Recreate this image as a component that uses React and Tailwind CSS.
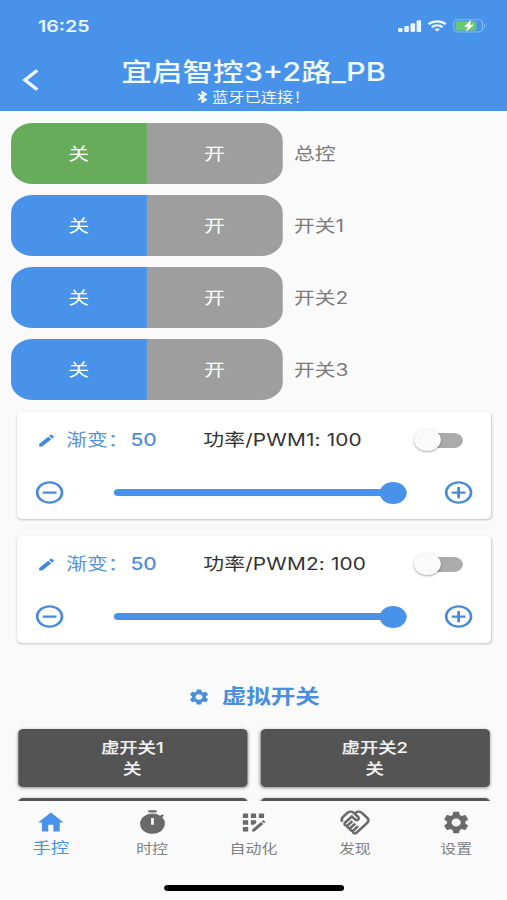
import React from "react";
import {
  MdHome,
  MdTimer,
  MdAppRegistration,
  MdOutlineHandshake,
  MdSettings,
  MdEdit,
  MdAddCircleOutline,
  MdRemoveCircleOutline,
} from "react-icons/md";

const switches = [
  { label: "总控", color: "bg-[#67ac5b]" },
  { label: "开关1", color: "bg-[#4892e9]" },
  { label: "开关2", color: "bg-[#4892e9]" },
  { label: "开关3", color: "bg-[#4892e9]" },
];

const tabs = [
  { label: "手控", Icon: MdHome, size: "h-[27px] w-[25px]", active: true },
  { label: "时控", Icon: MdTimer, size: "h-[27px] w-[27px]" },
  { label: "自动化", Icon: MdAppRegistration, size: "h-[27px] w-[26px]" },
  { label: "发现", Icon: MdOutlineHandshake, size: "-mt-px mb-[-1px] h-[29px] w-[26px]" },
  { label: "设置", Icon: MdSettings, size: "h-[27px] w-[25px]" },
];

function StatusBar() {
  return (
    <div className="flex h-[52px] items-center justify-between pl-[31px] pr-[17px] text-[#e9f5ff]">
      <span className="text-[16px] font-semibold leading-none">16:25</span>
      <div className="flex items-center gap-[5px]">
        <svg className="h-[12px] w-[19px]" viewBox="0 0 19 12" fill="currentColor">
          <rect x="0" y="8" width="3.8" height="4" rx="1" />
          <rect x="5.1" y="6" width="3.8" height="6" rx="1" />
          <rect x="10.2" y="3.3" width="3.8" height="8.7" rx="1" />
          <rect x="15.2" y="0.3" width="3.8" height="11.7" rx="1" />
        </svg>
        <svg className="h-[12px] w-[16px]" viewBox="0 0 16 12" fill="none" stroke="currentColor" strokeWidth="2.2">
          <path d="M1 4.3 A10 10 0 0 1 15 4.3" />
          <path d="M3.7 7.2 A6.2 6.2 0 0 1 12.3 7.2" />
          <path d="M8 11.6 L5.7 9.3 A3.3 3.3 0 0 1 10.3 9.3 Z" fill="currentColor" stroke="none" />
        </svg>
        <svg className="h-[14px] w-[27px]" viewBox="0 0 27 14" fill="none">
          <rect x="0.5" y="0.8" width="23.5" height="12.2" rx="3.4" stroke="#83bdf0" />
          <rect x="2" y="2.2" width="17" height="9.4" rx="2" fill="#68c878" />
          <path d="M25.3 5 a2.4 2.4 0 0 1 0 4 z" fill="#83bdf0" />
          <path d="M14.8 0.8 L9 7.8 H12 L10.4 13 L17 5.8 H13.7 Z" fill="#fff" />
        </svg>
      </div>
    </div>
  );
}

function Header() {
  return (
    <header className="h-[111px] bg-[#4892e9] text-[#f1faff]">
      <StatusBar />
      <div className="flex h-[59px] items-start">
        <div className="w-[60px] pl-[18px] pt-[17px]">
          <svg className="h-[22px] w-[14px]" viewBox="0 0 14 22" fill="none" stroke="currentColor" strokeWidth="3.1">
            <path d="M12.4 1.4 L2.4 11 L12.4 20.6" />
          </svg>
        </div>
        <div className="flex flex-1 flex-col items-center pt-[6px]">
          <h1 className="whitespace-nowrap text-[25px] font-medium leading-[28px]">宜启智控3+2路_PB</h1>
          <div className="flex items-center whitespace-nowrap pt-[2px] text-[13.3px] leading-[18px]">
            <svg className="mr-[3px] h-[12px] w-[9px]" viewBox="0 0 9 12" fill="none" stroke="currentColor" strokeWidth="1.6">
              <path d="M0.8 3 L7.2 8.8 L4.2 11.2 V0.8 L7.2 3.2 L0.8 9" />
            </svg>
            <span>蓝牙已连接！</span>
          </div>
        </div>
        <div className="w-[60px]" />
      </div>
    </header>
  );
}

function SwitchRow({ label, color }) {
  return (
    <div className="flex items-center">
      <div className="flex h-[61px] w-[222px] overflow-hidden rounded-[18px] text-[17px] text-white">
        <div className={"flex w-[110.5px] items-center justify-center pt-[3px] " + color}>关</div>
        <div className="flex flex-1 items-center justify-center bg-[#9e9e9e] pt-[3px]">开</div>
      </div>
      <span className="pl-[9px] pt-[3px] text-[17px] text-[#7b7b7b]">{label}</span>
    </div>
  );
}

function PwmCard({ n }) {
  return (
    <section className="h-[107px] rounded-[4px] bg-white px-[15px] pt-[12px] shadow-[0_1px_2px_rgba(0,0,0,0.22)]">
      <div className="flex h-[32px] items-center text-[17px]">
        <MdEdit className="ml-[1px] h-[17px] w-[16px] text-[#4189db]" />
        <span className="ml-[8px] w-[52.5px] whitespace-nowrap pt-[2px] text-[#5794d6]">渐变：</span>
        <span className="w-[59.5px] pt-[2px] font-medium text-[#4f8fd6]">50</span>
        <span className="whitespace-nowrap pt-[2px] tracking-[0.12px] text-[#333]">功率/PWM{n}: 100</span>
        <div className="ml-auto mr-[8px] flex h-[15px] w-[33px] items-center rounded-full bg-[#ababab]">
          <div className="-ml-[7px] h-[22px] w-[22px] shrink-0 rounded-full bg-[#fafafa] shadow-[0_1px_2px_rgba(0,0,0,0.35)]" />
        </div>
      </div>
      <div className="mt-[9px] flex h-[55px] items-center text-[#4a8bd8]">
        <MdRemoveCircleOutline className="-ml-[2px] h-[27px] w-[27px]" />
        <div className="ml-[39px] flex h-[7px] w-[239px] items-center justify-end rounded-full bg-[#4892e9]">
          <div className="h-[22px] w-[22px] shrink-0 rounded-full bg-[#4892e9]" />
        </div>
        <MdAddCircleOutline className="-mr-[2px] ml-auto h-[27px] w-[27px]" />
      </div>
    </section>
  );
}

function VirtualButton({ children }) {
  return (
    <button className="flex h-[58px] flex-col items-center justify-center rounded-[4px] bg-[#545454] text-[15px] font-medium leading-[21px] text-[#f2f2f2] shadow-[0_1px_3px_rgba(0,0,0,0.45)] [-webkit-text-stroke:0.15px]">
      {children}
    </button>
  );
}

export default function App() {
  return (
    <div className="h-[900px] w-[507px] overflow-hidden bg-[#fafafa]">
      <div
        className="flex h-[900px] w-[414px] origin-top-left scale-x-[1.2246] flex-col bg-[#fafafa] font-['Inter','Noto_Sans_CJK_SC',sans-serif]"
        lang="zh-CN"
      >
        <Header />
        <main className="h-[690px] shrink-0 overflow-hidden">
          <div className="flex flex-col gap-[11px] pl-[9px] pt-[11.5px]">
            {switches.map((s) => (
              <SwitchRow key={s.label} {...s} />
            ))}
          </div>
          <div className="flex flex-col gap-[17px] pl-[14px] pr-[13px] pt-[12.5px]">
            <PwmCard n={1} />
            <PwmCard n={2} />
          </div>
          <div className="mt-[40px] flex h-[28px] items-center justify-center gap-[9px] text-[20px] font-bold text-[#4a8fdc]">
            <MdSettings className="h-[20px] w-[19px]" />
            <h2>虚拟开关</h2>
          </div>
          <div className="grid grid-cols-2 gap-x-[11px] gap-y-[11px] px-[14.5px] pt-[18px]">
            <VirtualButton>
              <span>虚开关1</span>
              <span>关</span>
            </VirtualButton>
            <VirtualButton>
              <span>虚开关2</span>
              <span>关</span>
            </VirtualButton>
            <VirtualButton />
            <VirtualButton />
          </div>
        </main>
        <nav className="grid h-[84px] grid-cols-5 pt-[8px]">
          {tabs.map(({ label, Icon, size, active }) => (
            <div
              key={label}
              className={"flex flex-col items-center " + (active ? "text-[#4892e9]" : "text-[#6a6a6a]")}
            >
              <Icon className={"shrink-0 " + size} preserveAspectRatio="none" />
              <span
                className={
                  active
                    ? "whitespace-nowrap text-[15px] leading-[24px]"
                    : "whitespace-nowrap text-[13px] leading-[24px] text-[#808080]"
                }
              >
                {label}
              </span>
            </div>
          ))}
        </nav>
        <div className="mx-auto h-[6px] w-[147px] rounded-full bg-black" />
      </div>
    </div>
  );
}
